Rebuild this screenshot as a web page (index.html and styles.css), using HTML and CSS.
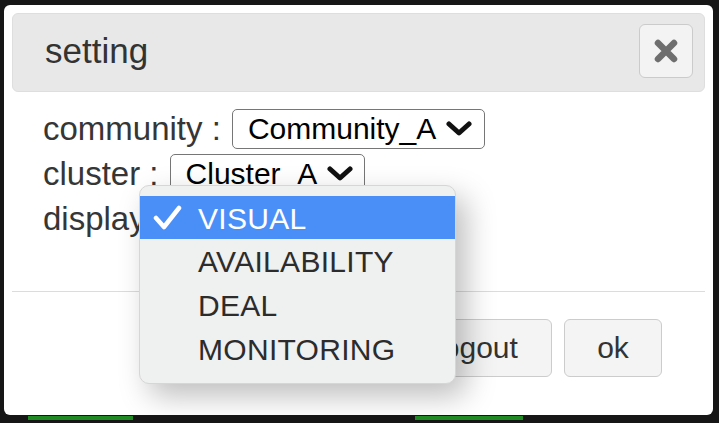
FILE: index.html
```html
<!DOCTYPE html>
<html>
<head>
<meta charset="utf-8">
<link rel="stylesheet" href="styles.css">
</head>
<body>
<div class="dialog">
  <div class="header">
    <span class="title">setting</span>
    <button class="close" aria-label="close">
      <svg width="28" height="26" viewBox="0 0 28 26"><path d="M6 5 L22 21 M22 5 L6 21" stroke="#6e6e6e" stroke-width="6.5" stroke-linecap="round"/></svg>
    </button>
  </div>
  <div class="body">
    <div class="row">
      <span class="label">community :</span>
      <div class="select sel-community"><span>Community_A</span>
        <svg class="chev" width="26" height="15" viewBox="0 0 26 15"><path d="M3 3 L13 12 L23 3" fill="none" stroke="#111" stroke-width="5" stroke-linecap="round" stroke-linejoin="round"/></svg>
      </div>
    </div>
    <div class="row">
      <span class="label">cluster :</span>
      <div class="select sel-cluster"><span>Cluster_A</span>
        <svg class="chev" width="26" height="15" viewBox="0 0 26 15"><path d="M3 3 L13 12 L23 3" fill="none" stroke="#111" stroke-width="5" stroke-linecap="round" stroke-linejoin="round"/></svg>
      </div>
    </div>
    <div class="row">
      <span class="label">display :</span>
    </div>
  </div>
  <div class="sep"></div>
  <div class="footer">
    <button class="btn btn-logout">logout</button>
    <button class="btn btn-ok">ok</button>
  </div>
  <div class="menu">
    <div class="item selected">
      <svg class="check" width="30" height="26" viewBox="0 0 30 26"><path d="M3 13 L11 22 L26 3" fill="none" stroke="#fff" stroke-width="4.5" stroke-linecap="round" stroke-linejoin="round"/></svg>
      <span>VISUAL</span>
    </div>
    <div class="item"><span>AVAILABILITY</span></div>
    <div class="item"><span>DEAL</span></div>
    <div class="item"><span>MONITORING</span></div>
  </div>
</div>
<div class="strip">
  <div class="bar bar1"></div>
  <div class="bar bar2"></div>
</div>
</body>
</html>
```

FILE: styles.css
```css
* { box-sizing: border-box; }
html, body {
  margin: 0;
  padding: 0;
  background: #161616;
  font-family: "Liberation Sans", Arial, sans-serif;
  overflow: hidden;
}
body {
  width: 719px;
  height: 423px;
  padding-top: 5px;
}
.dialog {
  position: relative;
  margin-left: 4px;
  width: 709px;
  height: 410px;
  background: #fff;
  border-radius: 6px;
  padding: 8px;
  display: flex;
  flex-direction: column;
}
.header {
  height: 79px;
  flex: none;
  background: #e8e8e8;
  border: 1px solid #dedede;
  border-radius: 6px;
  display: flex;
  align-items: center;
  justify-content: space-between;
  padding: 0 11px 0 32px;
}
.title {
  font-size: 35px;
  color: #333;
  margin-top: -3px;
}
.close {
  width: 54px;
  height: 54px;
  margin-top: -3px;
  background: #f3f3f3;
  border: 1px solid #cbcbcb;
  border-radius: 6px;
  display: flex;
  align-items: center;
  justify-content: center;
  padding: 0;
}
.body {
  margin-top: 14px;
  padding-left: 31px;
  display: flex;
  flex-direction: column;
}
.row {
  height: 45px;
  display: flex;
  align-items: center;
  gap: 11px;
}
.label {
  font-size: 33px;
  line-height: 45px;
  color: #363636;
}
.select {
  height: 40px;
  border: 1px solid #767676;
  border-radius: 5px;
  background: #fff;
  display: flex;
  align-items: center;
  padding: 0 11px 0 15px;
  font-size: 30px;
  color: #000;
  gap: 10px;
}
.sel-community { width: 253px; }
.sel-cluster { width: 195px; }
.chev { flex: none; }
.sep {
  margin-top: 50px;
  height: 1px;
  background: #dcdcdc;
  flex: none;
}
.footer {
  margin-top: 27px;
  display: flex;
  justify-content: flex-end;
  gap: 12px;
  padding-right: 43px;
}
.btn {
  height: 58px;
  background: #f4f4f4;
  border: 1px solid #cccccc;
  border-radius: 6px;
  font-family: "Liberation Sans", Arial, sans-serif;
  font-size: 30px;
  color: #333;
  padding: 0;
}
.btn-logout { width: 150px; }
.btn-ok { width: 98px; }
.menu {
  position: absolute;
  left: 135px;
  top: 180px;
  width: 317px;
  height: 199px;
  background: #eff0f0;
  border: 1px solid #d6d6d6;
  border-radius: 10px;
  box-shadow: 10px 12px 30px rgba(0,0,0,0.26);
  padding-top: 10px;
  overflow: hidden;
}
.item {
  position: relative;
  height: 44px;
  line-height: 45px;
  font-size: 30px;
  letter-spacing: 0.3px;
  color: #2c2c2c;
  padding-left: 58px;
}
.item.selected {
  background: #4a8ff8;
  color: #fff;
  height: 43px;
}
.check {
  position: absolute;
  left: 13px;
  top: 9px;
}
.strip {
  position: relative;
  height: 8px;
}
.bar {
  position: absolute;
  top: 1px;
  height: 4px;
  background: #1f8a22;
}
.bar1 { left: 28px; width: 105px; }
.bar2 { left: 415px; width: 108px; }
```
